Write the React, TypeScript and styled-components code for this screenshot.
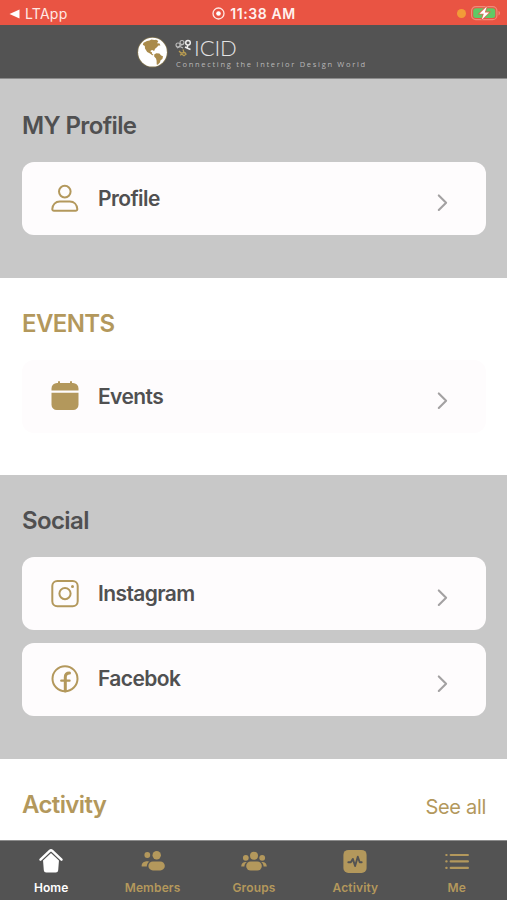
import React from "react";
import styled, { createGlobalStyle } from "styled-components";

const GOLD = "#b3985c";
const INK = "#505051";
const BAR = "#535353";

const GlobalStyle = createGlobalStyle`
  * { box-sizing: border-box; }
  body { margin: 0; background: #fff; font-family: Inter, "Liberation Sans", sans-serif; }
  svg { display: block; flex: none; overflow: visible; }
`;

const Screen = styled.div`
  width: 507px;
  height: 900px;
  display: flex;
  flex-direction: column;
  overflow: hidden;
`;

const StatusBar = styled.div`
  height: 25px;
  flex: none;
  display: grid;
  grid-template-columns: 1fr auto 1fr;
  align-items: center;
  padding: 2px 6px 0 9px;
  background: #e95443;
  color: #fff;
`;

const BackLink = styled.div`
  display: flex;
  align-items: center;
  gap: 5px;
  font-size: 14px;
  letter-spacing: 0.25px;
  color: #ffe9e4;
`;

const Clock = styled.div`
  display: flex;
  align-items: center;
  gap: 5px;
  font-size: 14px;
  font-weight: 600;
  letter-spacing: 0.6px;
  margin-right: 2px;
  color: #fff1ee;
`;

const StatusRight = styled.div`
  display: flex;
  align-items: center;
  justify-content: flex-end;
  gap: 5px;
`;

const MicDot = styled.span`
  width: 9px;
  height: 9px;
  border-radius: 50%;
  background: #f29b38;
`;

const Header = styled.header`
  height: 54px;
  flex: none;
  display: flex;
  align-items: flex-start;
  padding: 12px 0 0 137px;
  background: ${BAR};
  border-bottom: 1px solid #8b8b8b;
`;

const Brand = styled.div`
  margin-left: 7px;
`;

const BrandRow = styled.div`
  display: flex;
  height: 22px;
  align-items: center;
  gap: 2px;
`;

const BrandName = styled.span`
  font: 300 22px/24px Lato, sans-serif;
  letter-spacing: -0.1px;
  color: #e4e4e4;
`;

const Tagline = styled.div`
  margin-left: 1px;
  font: 400 7.500px/10px "Open Sans", sans-serif;
  letter-spacing: 1.700px;
  white-space: nowrap;
  color: #b9b9b9;
`;

const Section = styled.section<{ $gray?: boolean; $height: number; $top?: number }>`
  height: ${(p) => p.$height}px;
  flex: none;
  padding: ${(p) => p.$top ?? 31}px 21px 0 22px;
  background: ${(p) => (p.$gray ? "#c8c8c8" : "#fff")};
`;

const HeadingRow = styled.div`
  display: flex;
  justify-content: space-between;
  height: 30px;
`;

const Heading = styled.h2<{ $gold?: boolean }>`
  margin: 0;
  font-size: 24px;
  line-height: 30px;
  font-weight: 600;
  letter-spacing: -0.620px;
  color: ${(p) => (p.$gold ? GOLD : INK)};
`;

const SeeAll = styled.a`
  font-size: 20px;
  line-height: 34px;
  letter-spacing: -0.300px;
  color: ${GOLD};
`;

const CardList = styled.div`
  display: flex;
  flex-direction: column;
  gap: 12.500px;
  margin-top: 21px;
`;

const Card = styled.div`
  height: 73px;
  display: flex;
  align-items: center;
  padding: 0 37px 0 29px;
  border-radius: 12px;
  background: #fefcfd;
`;

const CardLabel = styled.span`
  flex: 1;
  margin-left: 19px;
  font-size: 21px;
  line-height: 28px;
  font-weight: 600;
  letter-spacing: -0.600px;
  color: ${INK};
`;

const ChevronSlot = styled.span`
  padding-top: 9px;
`;

const TabBar = styled.nav`
  height: 60px;
  flex: none;
  display: grid;
  grid-template-columns: repeat(5, 1fr);
  background: ${BAR};
  border-top: 1px solid #8c8c8c;
`;

const Tab = styled.div<{ $active?: boolean }>`
  display: flex;
  flex-direction: column;
  align-items: center;
  padding: 8px 0 0 1px;
  gap: 7px;
  color: ${(p) => (p.$active ? "#fff" : GOLD)};
`;

const TabLabel = styled.span`
  font-size: 12px;
  line-height: 15px;
  font-weight: 600;
  letter-spacing: 0.120px;
`;

const Globe = () => (
  <svg width="31" height="31" viewBox="0 0 31 31">
    <circle cx="15.5" cy="15.2" r="15.2" fill="#81744f" />
    <circle cx="15.5" cy="15.2" r="14.4" fill="#fff" />
    <path fill="#aa8b4b" d="M6.500 5.700 10 4l2.500-.6 2-.9 2.800.6 1.800-.3 2.200 1.300-1.200 2.100 2.500.2.8 2-2 .1-1.500 1.800-1.800 1.400-1 2.200-1.800-.9-1.500.4-.2 1.700 1.500.1-.2 1.400 1.700 1.500-1.300.1-2.300-1.800-2.800-1.400L8 11.600 7.800 9 5.800 7.700z" />
    <path fill="#aa8b4b" d="m17.200 17.400 2.100-1.200 3.100.4 1.700 1.800 1.900.9-.6 2.700-1.800 1.300-.7 2.200-2.100 2.200-1.100-.2-.1-3.800-.6-2.100-1.800-2.100z" />
  </svg>
);

const BrandMark = () => (
  <svg width="17" height="18" viewBox="0 0 17 18" fill="none">
    <g stroke="#bdbdbd" strokeWidth="1.100">
      <circle cx="3" cy="6" r="2" />
      <circle cx="7" cy="3.500" r="2" />
      <path d="m2 9 3-1.500L8 9M5 6.500l3-1" />
    </g>
    <g stroke="#eee" strokeWidth="1.500">
      <circle cx="13" cy="3.700" r="2.300" />
      <path d="m13 6-1 3-2-1M12 9l3.500 1.500" />
    </g>
    <path d="m4 12 2 2 4-.3 1 1.500-2 1.500-2-1.500-2 1M9 13.500l-1-3" stroke="#b99c51" strokeWidth="1.300" />
  </svg>
);

const Battery = () => (
  <svg width="30" height="15" viewBox="0 0 30 15">
    <rect x=".6" y=".6" width="25.300" height="13" rx="4.200" fill="none" stroke="#f08a7a" strokeWidth="1.200" />
    <rect x="2.200" y="2.200" width="22.100" height="9.800" rx="2.700" fill="#61c965" />
    <path d="M27.500 5c2 .7 2 3.600 0 4.400z" fill="#f08a7a" />
    <path d="M15.800.4 8.400 7.700h4.400l-2.100 6 7.400-7.300h-4.300z" fill="#fff" stroke="#e0664f" strokeWidth="1.600" paintOrder="stroke" />
  </svg>
);

const ProfileIcon = () => (
  <svg width="28" height="28" viewBox="0 0 28 28" fill="none" stroke={GOLD} strokeWidth="2" strokeLinejoin="round">
    <circle cx="13.800" cy="6.600" r="5.800" />
    <path d="M3 25.700c-1 0-1.800-.7-1.700-1.700.4-4.200 3.100-7.400 7.500-7.400h10c4.400 0 7.100 3.200 7.500 7.400.1 1-.7 1.700-1.700 1.700z" />
  </svg>
);

const CalendarIcon = () => (
  <svg width="28" height="31" viewBox="0 0 28 31" fill={GOLD}>
    <rect x="7" y="0" width="2" height="6" rx="1" />
    <rect x="19" y="0" width="2" height="6" rx="1" />
    <path d="M6 2h16a5.500 5.500 0 0 1 5.500 5.500v2H.5v-2A5.500 5.500 0 0 1 6 2zM.5 11.700h27v12A5.300 5.300 0 0 1 22.200 29H5.800a5.300 5.300 0 0 1-5.300-5.300z" />
  </svg>
);

const InstagramIcon = () => (
  <svg width="28" height="28" viewBox="0 0 28 28" fill="none" stroke={GOLD} strokeWidth="2">
    <rect x="1.300" y="1" width="25.400" height="25.200" rx="5" />
    <circle cx="14" cy="13.600" r="5.600" />
    <circle cx="21.500" cy="6.400" r="1.500" fill={GOLD} stroke="none" />
  </svg>
);

const FacebookIcon = () => (
  <svg width="28" height="28" viewBox="0 0 28 28" fill="none" stroke={GOLD}>
    <circle cx="14" cy="13.700" r="12.500" strokeWidth="2" />
    <path d="M14.300 26V12.300c0-2.900 1.400-4.200 4.200-4.200" strokeWidth="3" strokeLinecap="round" />
    <path d="M10.200 15.700h8.400" strokeWidth="2.200" strokeLinecap="round" />
  </svg>
);

const Chevron = () => (
  <svg width="12" height="18" viewBox="0 0 12 18" fill="none" stroke="#a3a1a2" strokeWidth="2.100" strokeLinecap="round" strokeLinejoin="round">
    <path d="m1.800 1.400 7.300 7.300-7.300 7.300" />
  </svg>
);

const HomeIcon = () => (
  <svg width="24" height="24" viewBox="0 0 24 24">
    <path d="m12 3.800 8 7.200-.8 10.200a2.400 2.400 0 0 1-2.400 2.200H7.200a2.400 2.400 0 0 1-2.400-2.200L4 11z" fill="#fff" />
    <path d="M1.500 11.500 10.700 2.700a2 2 0 0 1 2.600 0l9.200 8.800" fill="none" stroke={BAR} strokeWidth="3.600" />
    <path d="M1.500 10.700 10.700 1.900a2 2 0 0 1 2.600 0l9.200 8.800" fill="none" stroke="#fff" strokeWidth="2.500" strokeLinecap="round" />
  </svg>
);

const MembersIcon = () => (
  <svg width="24" height="24" viewBox="0 0 24 24" fill="currentColor">
    <circle cx="6.300" cy="6" r="2.900" />
    <circle cx="15.700" cy="6.300" r="4.200" />
    <rect x="7.400" y="12.400" width="16.400" height="9" rx="4.500" />
    <path d="M.7 17.600c-.5-3.200 2-5.500 6.600-5.200h1.200c-1.900 1.400-2.700 3-2.700 5.200z" />
  </svg>
);

const GroupsIcon = () => (
  <svg width="26" height="24" viewBox="0 0 26 24" fill="currentColor">
    <circle cx="13" cy="6.800" r="4" />
    <circle cx="4.800" cy="8.800" r="2.900" />
    <circle cx="21.200" cy="8.800" r="2.900" />
    <rect x="5.200" y="12.500" width="15.600" height="9" rx="4.500" />
    <path d="M.2 17.600c0-2.700 1.600-4.500 4.600-4.500h1c-1.700 1.300-2.300 2.700-2.400 4.500zm25.600 0c0-2.700-1.600-4.500-4.600-4.500h-1c1.700 1.300 2.300 2.700 2.400 4.500z" />
  </svg>
);

const ActivityIcon = () => (
  <svg width="24" height="24" viewBox="0 0 24 24">
    <rect x=".4" y=".9" width="23.200" height="23" rx="5" fill={GOLD} />
    <path d="M5.300 13.200h2.500l2-3.300 2.300 7.100 2.700-9.300 1.900 5.500h2" fill="none" stroke={BAR} strokeWidth="1.900" strokeLinecap="round" strokeLinejoin="round" />
  </svg>
);

const MenuIcon = () => (
  <svg width="24" height="24" viewBox="0 0 24 24" stroke="currentColor" strokeWidth="2.200" strokeLinecap="round">
    <path d="M1.300 6h.3M5.700 6h17.200M1.300 12.400h.3M5.700 12.400h17.200M1.300 18.900h.3M5.700 18.900h17.200" />
  </svg>
);

type LinkCardProps = { icon: React.ReactNode; label: string };

const LinkCard = ({ icon, label }: LinkCardProps) => (
  <Card>
    {icon}
    <CardLabel>{label}</CardLabel>
    <ChevronSlot><Chevron /></ChevronSlot>
  </Card>
);

const tabs = [
  { label: "Home", icon: <HomeIcon />, active: true },
  { label: "Members", icon: <MembersIcon /> },
  { label: "Groups", icon: <GroupsIcon /> },
  { label: "Activity", icon: <ActivityIcon /> },
  { label: "Me", icon: <MenuIcon /> },
];

export default function App() {
  return (
    <Screen>
      <GlobalStyle />
      <StatusBar>
        <BackLink>
          <svg width="11" height="10" viewBox="0 0 11 10"><path d="M.5 5 10.500.5v9z" fill="#fff" /></svg>
          LTApp
        </BackLink>
        <Clock>
          <svg width="13" height="13" viewBox="0 0 13 13">
            <circle cx="6.500" cy="6.500" r="5.500" fill="none" stroke="#ffe9e4" strokeWidth="1.300" />
            <circle cx="6.500" cy="6.500" r="2.300" fill="#fff" />
          </svg>
          11:38 AM
        </Clock>
        <StatusRight><MicDot /><Battery /></StatusRight>
      </StatusBar>
      <Header>
        <Globe />
        <Brand>
          <BrandRow><BrandMark /><BrandName>ICID</BrandName></BrandRow>
          <Tagline>Connecting the Interior Design World</Tagline>
        </Brand>
      </Header>
      <Section $gray $height={199} $top={32}>
        <HeadingRow><Heading>MY Profile</Heading></HeadingRow>
        <CardList><LinkCard icon={<ProfileIcon />} label="Profile" /></CardList>
      </Section>
      <Section $height={197}>
        <HeadingRow><Heading $gold>EVENTS</Heading></HeadingRow>
        <CardList><LinkCard icon={<CalendarIcon />} label="Events" /></CardList>
      </Section>
      <Section $gray $height={284}>
        <HeadingRow><Heading>Social</Heading></HeadingRow>
        <CardList>
          <LinkCard icon={<InstagramIcon />} label="Instagram" />
          <LinkCard icon={<FacebookIcon />} label="Facebok" />
        </CardList>
      </Section>
      <Section $height={81}>
        <HeadingRow><Heading $gold>Activity</Heading><SeeAll>See all</SeeAll></HeadingRow>
      </Section>
      <TabBar>
        {tabs.map((tab) => (
          <Tab key={tab.label} $active={tab.active}>
            {tab.icon}
            <TabLabel>{tab.label}</TabLabel>
          </Tab>
        ))}
      </TabBar>
    </Screen>
  );
}
